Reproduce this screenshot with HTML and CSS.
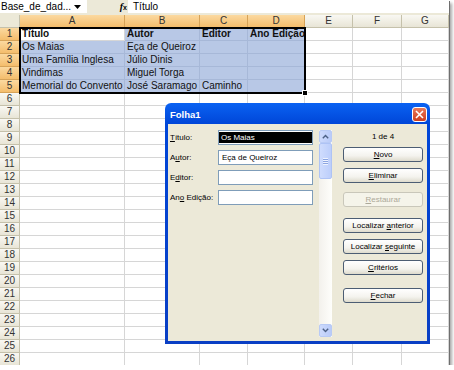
FILE: index.html
```html
<!DOCTYPE html>
<html>
  <head>
    <meta charset="utf-8">
    <link rel="stylesheet" href="styles.css">
  </head>
  <body>
    <div class="screen">
      <div class="formula-bar">
        <div class="name-box">
          <span>Base_de_dad...</span>
          <svg width="7" height="4" viewBox="0 0 7 4"><path d="M0 0h7L3.5 4z" fill="#000"/></svg>
        </div>
        <div class="fx"><i>f</i><span>x</span></div>
        <div class="formula">Título</div>
      </div>

      <div class="sheet">
        <div class="row head">
          <div class="corner"></div>
          <div class="on">A</div><div class="on">B</div><div class="on">C</div><div class="on">D</div>
          <div>E</div><div>F</div><div>G</div>
        </div>
        <div class="row">
          <div class="rh on">1</div>
          <div class="bold">Título</div><div class="sel bold">Autor</div><div class="sel bold">Editor</div><div class="sel bold">Ano Edição</div>
          <div></div><div></div><div></div>
        </div>
        <div class="row">
          <div class="rh on">2</div>
          <div class="sel">Os Maias</div><div class="sel">Eça de Queiroz</div><div class="sel"></div><div class="sel"></div>
          <div></div><div></div><div></div>
        </div>
        <div class="row">
          <div class="rh on">3</div>
          <div class="sel">Uma Família Inglesa</div><div class="sel">Júlio Dinis</div><div class="sel"></div><div class="sel"></div>
          <div></div><div></div><div></div>
        </div>
        <div class="row">
          <div class="rh on">4</div>
          <div class="sel">Vindimas</div><div class="sel">Miguel Torga</div><div class="sel"></div><div class="sel"></div>
          <div></div><div></div><div></div>
        </div>
        <div class="row">
          <div class="rh on">5</div>
          <div class="sel">Memorial do Convento</div><div class="sel">José Saramago</div><div class="sel">Caminho</div><div class="sel"></div>
          <div></div><div></div><div></div>
        </div>
        <div class="row"><div class="rh">6</div><div></div><div></div><div></div><div></div><div></div><div></div><div></div></div>
        <div class="row"><div class="rh">7</div><div></div><div></div><div></div><div></div><div></div><div></div><div></div></div>
        <div class="row"><div class="rh">8</div><div></div><div></div><div></div><div></div><div></div><div></div><div></div></div>
        <div class="row"><div class="rh">9</div><div></div><div></div><div></div><div></div><div></div><div></div><div></div></div>
        <div class="row"><div class="rh">10</div><div></div><div></div><div></div><div></div><div></div><div></div><div></div></div>
        <div class="row"><div class="rh">11</div><div></div><div></div><div></div><div></div><div></div><div></div><div></div></div>
        <div class="row"><div class="rh">12</div><div></div><div></div><div></div><div></div><div></div><div></div><div></div></div>
        <div class="row"><div class="rh">13</div><div></div><div></div><div></div><div></div><div></div><div></div><div></div></div>
        <div class="row"><div class="rh">14</div><div></div><div></div><div></div><div></div><div></div><div></div><div></div></div>
        <div class="row"><div class="rh">15</div><div></div><div></div><div></div><div></div><div></div><div></div><div></div></div>
        <div class="row"><div class="rh">16</div><div></div><div></div><div></div><div></div><div></div><div></div><div></div></div>
        <div class="row"><div class="rh">17</div><div></div><div></div><div></div><div></div><div></div><div></div><div></div></div>
        <div class="row"><div class="rh">18</div><div></div><div></div><div></div><div></div><div></div><div></div><div></div></div>
        <div class="row"><div class="rh">19</div><div></div><div></div><div></div><div></div><div></div><div></div><div></div></div>
        <div class="row"><div class="rh">20</div><div></div><div></div><div></div><div></div><div></div><div></div><div></div></div>
        <div class="row"><div class="rh">21</div><div></div><div></div><div></div><div></div><div></div><div></div><div></div></div>
        <div class="row"><div class="rh">22</div><div></div><div></div><div></div><div></div><div></div><div></div><div></div></div>
        <div class="row"><div class="rh">23</div><div></div><div></div><div></div><div></div><div></div><div></div><div></div></div>
        <div class="row"><div class="rh">24</div><div></div><div></div><div></div><div></div><div></div><div></div><div></div></div>
        <div class="row"><div class="rh">25</div><div></div><div></div><div></div><div></div><div></div><div></div><div></div></div>
        <div class="row"><div class="rh">26</div><div></div><div></div><div></div><div></div><div></div><div></div><div></div></div>

        <!-- selected range A1:D5 -->
        <div class="selection-frame"><span class="handle"></span></div>
      </div>

      <div class="dialog">
        <div class="dialog-title">
          <span>Folha1</span>
          <span class="close">
            <svg width="9" height="9" viewBox="0 0 9 9"><path d="M1 1l7 7M8 1l-7 7" stroke="#fff" stroke-width="1.6"/></svg>
          </span>
        </div>
        <div class="dialog-body">
          <div class="fields">
            <div class="field"><label><u>T</u>ítulo:</label><div class="input selected"><span>Os Maias</span></div></div>
            <div class="field"><label>A<u>u</u>tor:</label><div class="input">Eça de Queiroz</div></div>
            <div class="field"><label>E<u>d</u>itor:</label><div class="input"></div></div>
            <div class="field"><label>An<u>o</u> Edição:</label><div class="input"></div></div>
          </div>

          <div class="scrollbar">
            <div class="sb-btn">
              <svg width="7" height="5" viewBox="0 0 7 5"><path d="M0.8 4.2L3.5 1.5 6.2 4.2" fill="none" stroke="#4d6185" stroke-width="1.4"/></svg>
            </div>
            <div class="sb-thumb"><span class="grip"></span></div>
            <div class="sb-track"></div>
            <div class="sb-btn">
              <svg width="7" height="5" viewBox="0 0 7 5"><path d="M0.8 0.8L3.5 3.5 6.2 0.8" fill="none" stroke="#4d6185" stroke-width="1.4"/></svg>
            </div>
          </div>

          <div class="actions">
            <div class="counter">1 de 4</div>
            <button class="btn"><u>N</u>ovo</button>
            <button class="btn gap-s"><u>E</u>liminar</button>
            <button class="btn gap-m" disabled><u>R</u>estaurar</button>
            <button class="btn gap-l">Localizar <u>a</u>nterior</button>
            <button class="btn gap-s">Localizar <u>s</u>eguinte</button>
            <button class="btn gap-s"><u>C</u>ritérios</button>
            <button class="btn gap-xl"><u>F</u>echar</button>
          </div>
        </div>
      </div>
    </div>
  </body>
</html>
```

FILE: styles.css
```css
body {
  margin: 0;
  background-color: #fff;
  font-family: "Liberation Sans", Arial, sans-serif;
  color: #000;
}

.screen {
  position: relative;
  width: 449px;
  height: 365px;
  overflow: hidden;
  background-color: #fff;
  box-shadow: 1px 1px 0 #6f6f6f, 3px 3px 3px rgba(0, 0, 0, 0.35);
}

/* formula bar */

.formula-bar {
  display: flex;
  height: 15px;
  padding-bottom: 2px;
  box-sizing: border-box;
  background-color: #ece9d8;
  font-size: 10px;
}

.name-box {
  width: 87px;
  display: flex;
  align-items: center;
  justify-content: space-between;
  padding: 0 6px 0 1px;
  box-sizing: border-box;
  background-color: #fff;
}

.fx {
  width: 41px;
  padding-right: 1px;
  box-sizing: border-box;
  text-align: right;
  line-height: 13px;
  font-family: "Liberation Serif", serif;
  font-size: 10px;
  font-weight: bold;
}

.fx span {
  font-size: 7px;
  font-family: "Liberation Sans", sans-serif;
}

.formula {
  flex-grow: 1;
  padding-left: 5px;
  line-height: 13px;
  background-color: #fff;
}

/* sheet grid */

.sheet {
  position: relative;
}

.row {
  display: grid;
  grid-template-columns: 20px 105px 75px 48px 57px 48px 49px 47px;
  height: 13px;
}

.row > div {
  border-right: 1px solid #d6d6d6;
  border-bottom: 1px solid #d6d6d6;
  padding-left: 2px;
  font-size: 10px;
  line-height: 12px;
  white-space: nowrap;
  overflow: hidden;
  color: #111;
}

.row > div.sel {
  background-color: #b8c8e6;
  border-color: #a7b8d8;
}

.row > div.bold {
  font-weight: bold;
}

.head > div,
.row > div.rh {
  padding-left: 0;
  text-align: center;
  color: #333;
  background: linear-gradient(#f9f8f3, #e8e5d6);
  border-right-color: #c5c1ab;
  border-bottom-color: #c5c1ab;
}

.head > div.on,
.row > div.rh.on {
  background: linear-gradient(#fbd9a0, #f4bd6c);
  border-right-color: #d6a358;
  border-bottom-color: #d6a358;
}

.head > div.corner {
  background: #ece9d8;
}

.selection-frame {
  position: absolute;
  left: 19px;
  top: 12px;
  width: 287px;
  height: 67px;
  border: 2px solid #000;
  box-sizing: border-box;
}

.handle {
  position: absolute;
  right: -4px;
  bottom: -4px;
  width: 4px;
  height: 4px;
  background-color: #000;
  border: 1px solid #fff;
}

/* record form dialog */

.dialog {
  position: absolute;
  left: 165px;
  top: 103px;
  width: 265px;
  height: 241px;
  display: flex;
  flex-direction: column;
  padding: 0 3px 3px;
  box-sizing: border-box;
  border-radius: 6px 6px 0 0;
  background: linear-gradient(#0a62f2, #0046d8 21px, #0a3fc4);
  font-size: 8px;
}

.dialog-title {
  height: 21px;
  display: flex;
  align-items: center;
  justify-content: space-between;
  padding: 2px 0 0 2px;
  box-sizing: border-box;
  color: #fff;
  font-size: 9.5px;
  font-weight: bold;
}

.close {
  width: 15px;
  height: 15px;
  display: flex;
  align-items: center;
  justify-content: center;
  box-sizing: border-box;
  border: 1px solid #fff;
  border-radius: 3px;
  background: linear-gradient(#e8795a, #cc3e1f);
}

.dialog-body {
  flex-grow: 1;
  display: flex;
  align-items: flex-start;
  padding: 6px 4px 0 2px;
  background-color: #ece9d8;
}

.fields {
  width: 143px;
}

.field {
  display: flex;
  align-items: center;
  height: 15px;
  margin-bottom: 5px;
}

.field label {
  width: 48px;
}

.input {
  width: 95px;
  height: 15px;
  padding: 0 3px;
  box-sizing: border-box;
  border: 1px solid #7f9db9;
  background-color: #fff;
  line-height: 13px;
}

.input.selected {
  padding: 1px 0;
}

.input.selected span {
  display: block;
  height: 11px;
  padding-left: 2px;
  line-height: 11px;
  color: #fff;
  background-color: #000;
}

.scrollbar {
  width: 13px;
  height: 207px;
  margin-left: 6px;
  display: flex;
  flex-direction: column;
  background: linear-gradient(90deg, #f3f1ec, #fefefb);
}

.sb-btn {
  height: 13px;
  display: flex;
  align-items: center;
  justify-content: center;
  box-sizing: border-box;
  border: 1px solid #b8caf5;
  border-radius: 2px;
  background: linear-gradient(90deg, #cddafc, #b9cbf9);
}

.sb-thumb {
  height: 36px;
  display: flex;
  align-items: center;
  justify-content: center;
  box-sizing: border-box;
  border: 1px solid #aec3f5;
  border-radius: 2px;
  background: linear-gradient(90deg, #cfdcfd, #bccefb);
}

.grip {
  width: 5px;
  height: 7px;
  background: repeating-linear-gradient(#eef3ff 0 1px, #8ca5e0 1px 2px);
}

.sb-track {
  flex-grow: 1;
}

.actions {
  width: 80px;
  margin-left: 11px;
  display: flex;
  flex-direction: column;
}

.counter {
  height: 17px;
  text-align: center;
  line-height: 14px;
}

.btn {
  height: 15px;
  padding: 0;
  border: 1px solid #4c5d73;
  border-radius: 3px;
  background: linear-gradient(#fff, #f4f3ee 60%, #dedbcd);
  font-family: "Liberation Sans", Arial, sans-serif;
  font-size: 8px;
  color: #000;
}

.btn:disabled {
  border-color: #c9c7ba;
  background: #f5f4ea;
  color: #aca899;
}

.btn.gap-s {
  margin-top: 6px;
}

.btn.gap-m {
  margin-top: 9px;
}

.btn.gap-l {
  margin-top: 11px;
}

.btn.gap-xl {
  margin-top: 13px;
}
```
